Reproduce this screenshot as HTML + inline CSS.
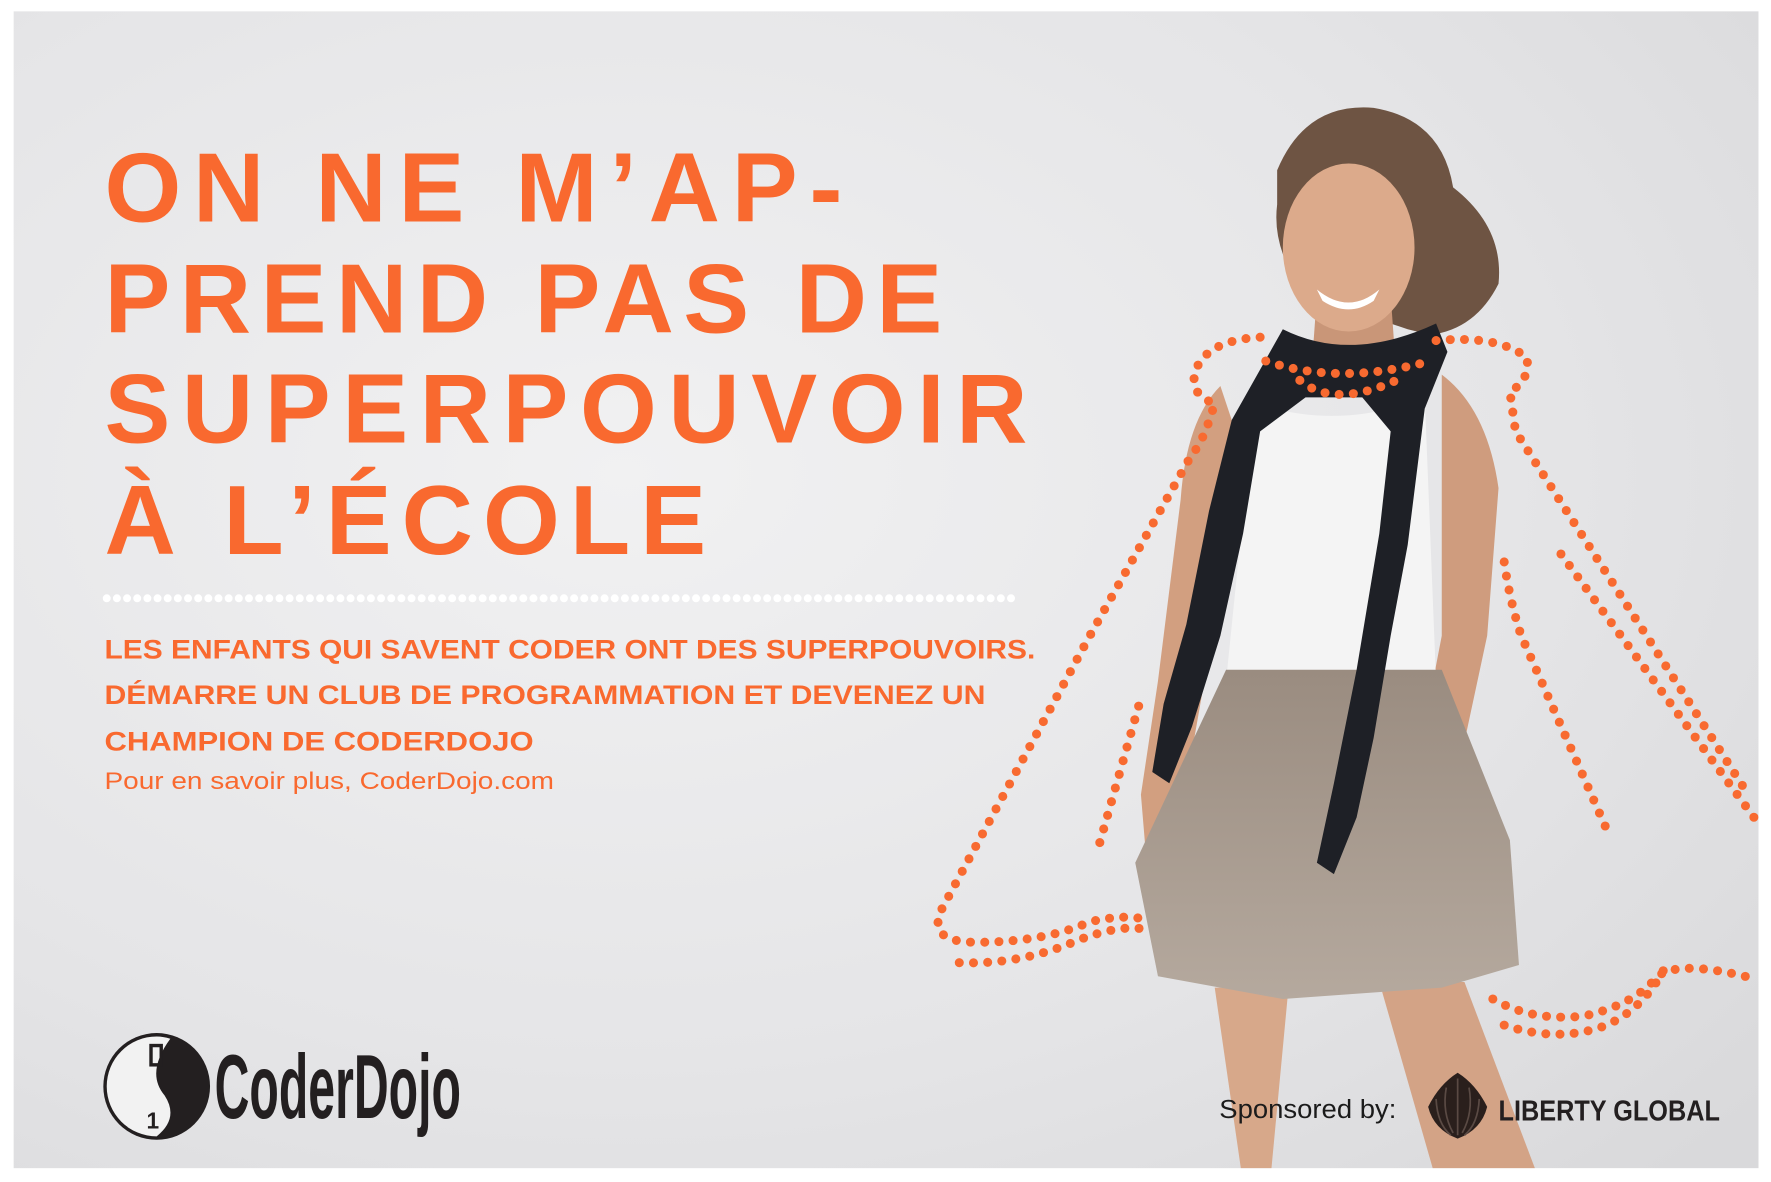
<!DOCTYPE html>
<html><head><meta charset="utf-8"><style>
html,body{margin:0;padding:0;background:#fff;}
svg{display:block;}
</style></head><body>
<svg width="1771" height="1182" viewBox="0 0 1560 1041.2" xmlns="http://www.w3.org/2000/svg" font-family="Liberation Sans, sans-serif">
<defs>
<radialGradient id="bg" cx="0.35" cy="0.4" r="0.85">
<stop offset="0" stop-color="#f1f1f2"/>
<stop offset="0.6" stop-color="#e5e5e7"/>
<stop offset="1" stop-color="#d9d9db"/>
</radialGradient>
<linearGradient id="skirt" x1="0" y1="0" x2="0" y2="1">
<stop offset="0" stop-color="#9a8c80"/><stop offset="1" stop-color="#b5a99e"/>
</linearGradient>
</defs>
<rect x="0" y="0" width="1560" height="1041.2" fill="#fff"/>
<rect x="12" y="10" width="1537" height="1019" fill="url(#bg)"/>

<g>
<path d="M1070 870 L1135 870 L1120 1029 L1093 1029 Z" fill="#d7a88a"/>
<path d="M1215 865 L1290 865 L1352 1029 L1262 1029 Z" fill="#d3a386"/>
<path d="M1075 340 Q1045 370 1040 440 L1020 600 L1005 700 L1010 760 L1035 755 L1045 690 L1075 520 L1095 400 Z" fill="#d29f80"/>
<path d="M1270 330 Q1310 360 1320 430 L1310 560 L1280 700 L1250 780 L1225 800 L1215 780 L1245 690 L1270 560 Z" fill="#cf9c7e"/>
<path d="M1125 150 Q1150 90 1210 95 Q1270 105 1280 165 Q1325 200 1320 250 Q1300 290 1260 295 L1240 290 L1150 260 Q1120 220 1125 180 Z" fill="#6e5443"/>
<path d="M1160 260 L1225 260 L1230 330 L1155 330 Z" fill="#c99678"/>
<ellipse cx="1188" cy="218" rx="58" ry="74" fill="#dcaa8b"/>
<path d="M1160 255 Q1188 278 1215 255 L1210 265 Q1188 280 1165 265 Z" fill="#fff"/>
<path d="M1105 355 Q1180 380 1255 350 L1265 600 L1080 600 Z" fill="#f4f4f4"/>
<path d="M1080 590 L1270 590 L1330 740 L1338 850 L1270 870 L1130 880 L1020 860 L1000 760 Z" fill="url(#skirt)"/>
<path d="M1130 290 Q1190 320 1265 285 L1275 310 L1255 360 L1240 480 L1225 560 L1210 650 L1195 720 L1175 770 L1160 760 L1175 690 L1195 590 L1215 470 L1225 380 L1200 350 L1150 350 L1110 380 L1095 470 L1075 560 L1050 640 L1030 690 L1015 680 L1025 620 L1045 550 L1065 450 L1085 370 Z" fill="#1e2026"/>
</g>

<g fill="none" stroke="#f86a30" stroke-width="8" stroke-linecap="round" stroke-dasharray="0 12.5">
<path d="M1110 297 Q1060 300 1052 330 Q1050 350 1070 355 Q1060 390 1050 400 L960 560 L830 800 Q815 830 860 830 Q920 830 960 812 Q990 805 1010 810"/>
<path d="M845 848 Q900 850 950 828 Q985 815 1005 818"/>
<path d="M1003 622 L966 752"/>
<path d="M1265 300 Q1320 295 1345 315 Q1348 335 1330 345 L1335 380 L1540 700"/>
<path d="M1375 488 L1545 720"/>
<path d="M1325 495 Q1330 530 1340 560 L1415 730"/>
<path d="M1315 880 Q1350 900 1395 895 Q1440 885 1460 860 Q1480 845 1545 862"/>
<path d="M1325 903 Q1370 918 1410 905 Q1450 890 1470 845"/>
<path d="M1115 318 Q1180 340 1260 318"/>
<path d="M1145 335 Q1175 360 1230 335"/>
</g>

<g fill="#f9692f" font-weight="bold" font-size="87">
<text x="92" y="195" textLength="650" lengthAdjust="spacing">ON NE M’AP-</text>
<text x="92" y="293" textLength="738" lengthAdjust="spacing">PREND PAS DE</text>
<text x="92" y="390" textLength="813" lengthAdjust="spacing">SUPERPOUVOIR</text>
<text x="92" y="488" textLength="530" lengthAdjust="spacing">À L’ÉCOLE</text>
</g>
<line x1="94" y1="527" x2="898" y2="527" stroke="#fff" stroke-width="7" stroke-linecap="round" stroke-dasharray="0 8.95"/>

<g fill="#f9692f" font-weight="bold" font-size="24">
<text x="92" y="580" textLength="820" lengthAdjust="spacingAndGlyphs">LES ENFANTS QUI SAVENT CODER ONT DES SUPERPOUVOIRS.</text>
<text x="92" y="620" textLength="776" lengthAdjust="spacingAndGlyphs">DÉMARRE UN CLUB DE PROGRAMMATION ET DEVENEZ UN</text>
<text x="92" y="661" textLength="378" lengthAdjust="spacingAndGlyphs">CHAMPION DE CODERDOJO</text>
</g>
<text x="92" y="695" fill="#f9692f" font-size="21" textLength="396" lengthAdjust="spacingAndGlyphs">Pour en savoir plus, CoderDojo.com</text>

<circle cx="138" cy="957" r="47" fill="#231f20"/>
<path d="M138 913 A44 44 0 0 0 138 1001 Q158 985 145 965 Q128 945 150 915 Q144 913 138 913 Z" fill="#f2f2f2"/>
<rect x="133" y="921" width="9" height="17" fill="none" stroke="#231f20" stroke-width="3"/>
<text x="129" y="994" fill="#231f20" font-size="20" font-weight="bold">1</text>
<text x="189" y="985" fill="#231f20" font-size="80" font-weight="bold" textLength="217" lengthAdjust="spacingAndGlyphs">CoderDojo</text>

<text x="1074" y="985" fill="#1b1b1b" font-size="23" textLength="156" lengthAdjust="spacingAndGlyphs">Sponsored by:</text>
<path d="M1284 945 Q1300 955 1310 975 Q1305 995 1284 1003 Q1263 995 1258 975 Q1268 955 1284 945 Z" fill="#2a1f1c"/>
<g stroke="#5a4a44" stroke-width="1.5" fill="none">
<path d="M1284 950 L1284 1000 M1274 958 Q1270 980 1280 998 M1294 958 Q1298 980 1288 998 M1265 968 Q1266 990 1278 1000 M1303 968 Q1302 990 1290 1000"/>
</g>
<text x="1320" y="987" fill="#231f20" font-size="25" font-weight="bold" textLength="195" lengthAdjust="spacingAndGlyphs">LIBERTY GLOBAL</text>
</svg>
</body></html>
